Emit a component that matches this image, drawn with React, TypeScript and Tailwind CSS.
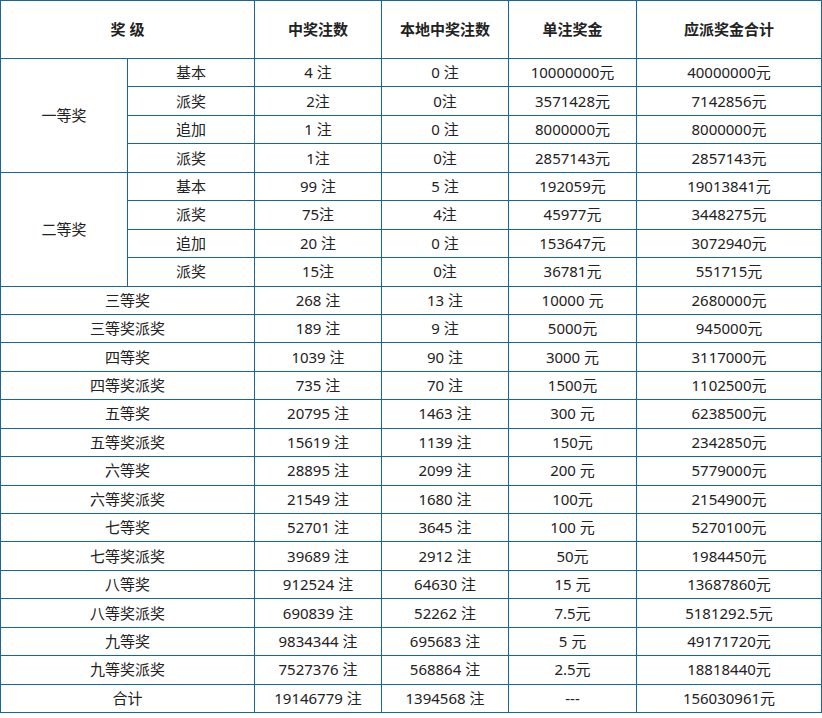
import type { ReactNode } from 'react'

type Row = [string, string, string, string]

const firstPrize: [string, ...Row][] = [
  ['基本', '4 注', '0 注', '10000000元', '40000000元'],
  ['派奖', '2注', '0注', '3571428元', '7142856元'],
  ['追加', '1 注', '0 注', '8000000元', '8000000元'],
  ['派奖', '1注', '0注', '2857143元', '2857143元'],
]

const secondPrize: [string, ...Row][] = [
  ['基本', '99 注', '5 注', '192059元', '19013841元'],
  ['派奖', '75注', '4注', '45977元', '3448275元'],
  ['追加', '20 注', '0 注', '153647元', '3072940元'],
  ['派奖', '15注', '0注', '36781元', '551715元'],
]

const otherPrizes: [string, ...Row][] = [
  ['三等奖', '268 注', '13 注', '10000 元', '2680000元'],
  ['三等奖派奖', '189 注', '9 注', '5000元', '945000元'],
  ['四等奖', '1039 注', '90 注', '3000 元', '3117000元'],
  ['四等奖派奖', '735 注', '70 注', '1500元', '1102500元'],
  ['五等奖', '20795 注', '1463 注', '300 元', '6238500元'],
  ['五等奖派奖', '15619 注', '1139 注', '150元', '2342850元'],
  ['六等奖', '28895 注', '2099 注', '200 元', '5779000元'],
  ['六等奖派奖', '21549 注', '1680 注', '100元', '2154900元'],
  ['七等奖', '52701 注', '3645 注', '100 元', '5270100元'],
  ['七等奖派奖', '39689 注', '2912 注', '50元', '1984450元'],
  ['八等奖', '912524 注', '64630 注', '15 元', '13687860元'],
  ['八等奖派奖', '690839 注', '52262 注', '7.5元', '5181292.5元'],
  ['九等奖', '9834344 注', '695683 注', '5 元', '49171720元'],
  ['九等奖派奖', '7527376 注', '568864 注', '2.5元', '18818440元'],
  ['合计', '19146779 注', '1394568 注', '---', '156030961元'],
]

function Cell({ children, colSpan, rowSpan }: { children: ReactNode; colSpan?: number; rowSpan?: number }) {
  return (
    <td colSpan={colSpan} rowSpan={rowSpan} className="border border-[#17679f] p-0 text-center align-middle">
      {children}
    </td>
  )
}

function GroupRows({ label, rows }: { label: string; rows: [string, ...Row][] }) {
  return (
    <>
      {rows.map(([sub, a, b, c, d], i) => (
        <tr key={i} className="h-[28.45px]">
          {i === 0 && <Cell rowSpan={rows.length}>{label}</Cell>}
          <Cell>{sub}</Cell>
          <Cell>{a}</Cell>
          <Cell>{b}</Cell>
          <Cell>{c}</Cell>
          <Cell>{d}</Cell>
        </tr>
      ))}
    </>
  )
}

export default function App() {
  return (
    <div className="bg-white w-[822px] font-['Noto_Sans','Noto_Sans_CJK_SC',sans-serif] text-[15px] leading-none text-[#222]">
      <table className="w-[822px] table-fixed border-collapse">
        <colgroup>
          <col className="w-[127px]" />
          <col className="w-[127px]" />
          <col className="w-[127px]" />
          <col className="w-[127px]" />
          <col className="w-[128px]" />
          <col />
        </colgroup>
        <thead>
          <tr className="h-[58px] font-bold">
            <Cell colSpan={2}>奖 级</Cell>
            <Cell>中奖注数</Cell>
            <Cell>本地中奖注数</Cell>
            <Cell>单注奖金</Cell>
            <Cell>应派奖金合计</Cell>
          </tr>
        </thead>
        <tbody>
          <GroupRows label="一等奖" rows={firstPrize} />
          <GroupRows label="二等奖" rows={secondPrize} />
          {otherPrizes.map(([name, a, b, c, d]) => (
            <tr key={name} className="h-[28.45px]">
              <Cell colSpan={2}>{name}</Cell>
              <Cell>{a}</Cell>
              <Cell>{b}</Cell>
              <Cell>{c}</Cell>
              <Cell>{d}</Cell>
            </tr>
          ))}
        </tbody>
      </table>
    </div>
  )
}
